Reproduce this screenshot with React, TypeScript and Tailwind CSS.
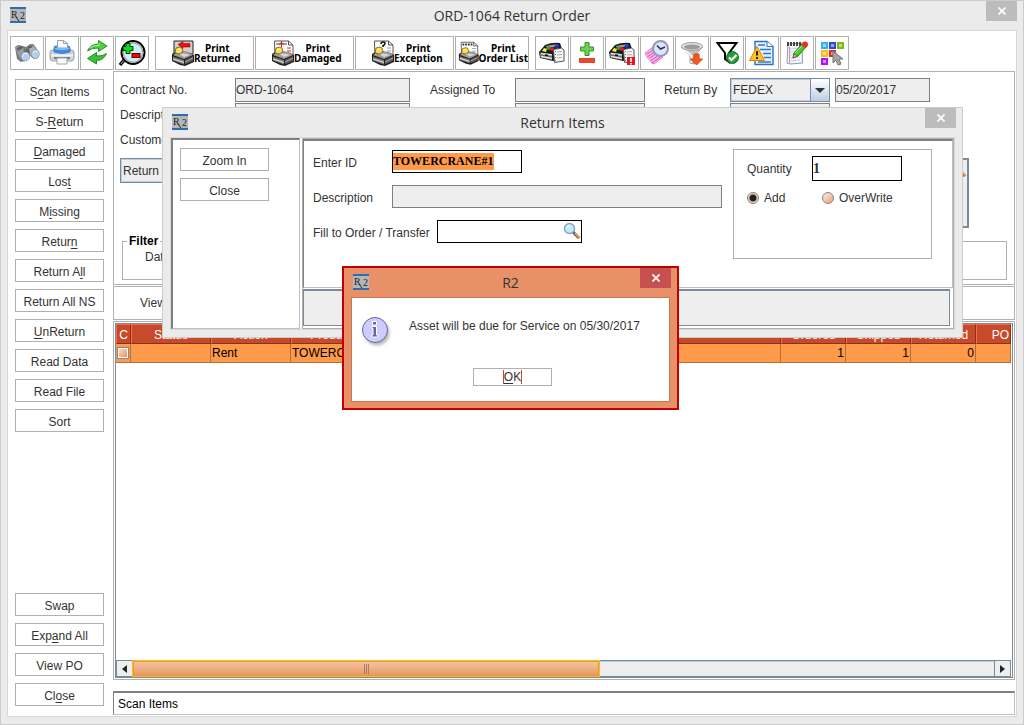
import type { ReactNode } from "react";

const field =
  "h-6 border border-[#7f7f7f] bg-[#eeeeee] text-xs text-[#333333] outline-none";

/* ---------- icons ---------- */

function R2Icon() {
  return (
    <svg width="16" height="16" viewBox="0 0 16 16" aria-hidden="true">
      <rect width="16" height="16" fill="#b4b7ba" />
      <rect width="16" height="2" fill="#2f6cb0" />
      <rect y="14" width="16" height="2" fill="#2f6cb0" />
      <text x="1" y="11" fontSize="10" fill="#222" fontFamily="Liberation Serif, serif">
        R
      </text>
      <text x="10" y="12" fontSize="10" fill="#222" fontFamily="Liberation Serif, serif">
        2
      </text>
      <path d="M6 10l3 4" stroke="#222" />
    </svg>
  );
}

function Icon({ children }: { children: ReactNode }) {
  return (
    <svg width="28" height="28" viewBox="0 0 28 28" fill="none" aria-hidden="true">
      {children}
    </svg>
  );
}

function BinocularsIcon() {
  return (
    <Icon>
      <path d="M2 8l3-2 5 1 3 1 4-3h3l2 2 4 7-1 5-4 1-5-4-4 6-4 1-4-3z" fill="#777b80" />
      <path d="M3 8l3-1 4 2 5 6-5 5-3-1-3-6z" fill="#9a9ea3" />
      <path d="M15 6l3-.5 3 2 4 6-5 5-3-3z" fill="#aeb2b6" />
      <path d="M4 9l4-2 2 2-5 3zM15 7l3-1 2 2-5 2z" fill="#5d6066" />
      <path d="M10 11l6-1 1 4-4 1z" fill="#63666b" />
      <ellipse cx="12.500" cy="17.500" rx="4" ry="4.400" fill="#eef5fd" stroke="#8b97a8" />
      <ellipse cx="12.800" cy="18" rx="2.800" ry="3.200" fill="#a9cdf8" />
      <ellipse cx="22.500" cy="15" rx="3.600" ry="4.200" fill="#eef5fd" stroke="#8b97a8" />
      <ellipse cx="22.800" cy="15.500" rx="2.500" ry="3" fill="#a9cdf8" />
    </Icon>
  );
}

function PrinterIcon() {
  return (
    <Icon>
      <path d="M2 13q0-2 3-2h18q3 0 3 2v6q0 3-3 3H5q-3 0-3-3z" fill="#cfd3d8" stroke="#9ba1a9" />
      <path d="M6 13V9q0-2 2-2h12q2 0 2 2v4q-8 3-16 0z" fill="#3d8de8" stroke="#3f7fcf" />
      <path d="M7 9q7-2 14 0v1q-7 2-14 0z" fill="#8fc3f8" />
      <path d="M9.500 9V1.500h6l4 3V9z" fill="#f7f9fc" stroke="#9aa0a9" />
      <path d="M15.500 1.500v3h4" stroke="#9aa0a9" />
      <path d="M3 16.500h22" stroke="#f4f4f4" strokeWidth="2" />
      <path d="M6 19h16" stroke="#555b64" strokeWidth="1.500" />
      <path d="M9 19h10v6H9z" fill="#fafafa" stroke="#a4a4a4" />
    </Icon>
  );
}

function RefreshIcon() {
  return (
    <Icon>
      <path
        d="M4.500 12q3-7 11-7V1.500L24 7l-8.500 5.500V9Q9 8.500 4.500 12z"
        fill="#4fd13f"
        stroke="#22902a"
      />
      <path
        d="M23.500 14.500q-3 7-10 7V25l-9-5.500 9-6V17q6 .5 10-2.500z"
        fill="#3cc033"
        stroke="#22902a"
      />
      <path d="M7 9q3-3 9-2.500V4" stroke="#a8f09a" />
    </Icon>
  );
}

function ZoomIcon() {
  return (
    <Icon>
      <path d="M7 20l-5 6" stroke="#000" strokeWidth="3.500" />
      <path d="M6.500 20.500L3 25" stroke="#b9b9b9" />
      <circle cx="15" cy="13.500" r="11.500" fill="#cdeef2" stroke="#000" strokeWidth="2" />
      <circle cx="15" cy="13.500" r="9.800" stroke="#a9a9a9" strokeWidth="1.500" />
      <path
        d="M8 4.500h4v3h3v4h-3v3H8v-3H5v-4h3z"
        fill="#0de01b"
        stroke="#003c00"
      />
      <rect x="14" y="14.500" width="8" height="4" fill="#f00" stroke="#500" />
    </Icon>
  );
}

function TrayPrinter({ kind }: { kind: "returned" | "damaged" | "exception" | "batch" }) {
  return (
    <svg width="24" height="28" viewBox="0 0 24 28" fill="none" aria-hidden="true">
      {kind === "returned" ? (
        <>
          <path d="M3 2h19v13H3z" fill="#cfcfcf" stroke="#222" />
          <path d="M7 5.500L12 2.500v2h7v3.500h-7v1.500z" fill="#f00d0d" stroke="#800" strokeWidth=".5" />
        </>
      ) : (
        <>
          <path d="M3.500 2h14l4.500 4v13h-18z" fill="#fff" stroke="#555" />
          <path d="M17.500 2v4H22" stroke="#555" />
          <path
            d="M16 9h4M16 12h4M16 15h4"
            stroke={kind === "damaged" ? "#e01818" : "#999"}
          />
        </>
      )}
      {kind === "damaged" && (
        <>
          <path d="M5 5h11" stroke="#444" />
          <path d="M10.500 2v6M8 5.500l2.500-2 2.500 2" stroke="#e01818" />
        </>
      )}
      {kind === "exception" && (
        <path d="M10 5q0-2 2-2t2 1.500-2 2v1.500" stroke="#111" strokeWidth="1.500" />
      )}
      {kind === "batch" && (
        <path d="M5 4.500h11" stroke="#333" strokeWidth="2" strokeDasharray="2 1" />
      )}
      <path d="M1 15l5-3 11 1 6 3v7l-9 4-5-1-8-4z" fill="#1d1d1d" />
      <path d="M2 16l5-4 10 1 5 3-9 4z" fill="#9c9c9c" />
      <path d="M7 14l9 1 3 1-6 2z" fill="#d6d6d6" />
      <path d="M2 17.500l11 3.500v4.500L2 21.500z" fill="#7b7b7b" />
      <path d="M2 20l11 3.500" stroke="#dedede" strokeWidth="1.200" />
      <path d="M14 21l8-4v5l-8 3.500z" fill="#5a5a5a" />
      <path d="M14 23l8-4" stroke="#a8a8a8" />
      <path d="M4 14l1-5 4-1 2 1 1 4-4 2z" fill="#ffd94a" stroke="#6d5212" strokeWidth=".8" />
      <path d="M6 10l4 1" stroke="#fff3b0" />
    </svg>
  );
}

function DrawerShape() {
  return (
    <>
      <path d="M1 13L7 6q7-3 15-2l2 6v9l-9 3L2 19z" fill="#1b1b1b" />
      <path d="M8 7q6-2 12-1.500v2L9 9z" fill="#9a9a9a" />
      <path d="M4 12l2-3 3 1-1 3z" fill="#fff04d" />
      <path d="M8 10l2-3 2.500 1-1 3z" fill="#2aa83a" />
      <path d="M11 11l2-3 3 1-1 3z" fill="#e81818" />
      <path d="M16 8l2-3 3 1-1 3z" fill="#2438d8" />
      <path d="M2 13.500l12 1.500v6L2 18.500z" fill="#6d6d6d" />
      <path d="M3 14.500l11 1.500M3 17.500l11 2" stroke="#e2e2e2" strokeWidth="1.300" />
      <path d="M7 16l3 .5" stroke="#111" strokeWidth="1.500" />
      <path d="M15.500 10.500l8-1.500 2.500 2v11l-9.500 1.500z" fill="#f6f6f6" stroke="#555" />
      <path d="M19 13l5-.5M19 16l5-.5M19 19l5-.5" stroke="#aaa" />
      <path d="M17.500 12v10" stroke="#777" strokeDasharray="1 2" />
    </>
  );
}

function DrawerIcon() {
  return (
    <Icon>
      <DrawerShape />
    </Icon>
  );
}

function DrawerAlertIcon() {
  return (
    <Icon>
      <DrawerShape />
      <rect x="19" y="18" width="8" height="8" fill="#e5151f" />
      <path d="M23 19v4M23 24v1.500" stroke="#fff" strokeWidth="1.600" />
    </Icon>
  );
}

function PlusMinusIcon() {
  return (
    <Icon>
      <path d="M12 3.500h4V8h4.500v4H16v4.500h-4V12H7.500V8H12z" fill="#6fd04f" stroke="#2d9622" />
      <rect x="6.500" y="19.500" width="15" height="4" fill="#f0452c" stroke="#e0482c" />
    </Icon>
  );
}

function ReportClockIcon() {
  return (
    <Icon>
      <path d="M2 14L10 8l10 10-9 7q-3 0-4-4-3-1-5-7z" fill="#fbb4ee" stroke="#dc7fcb" />
      <path
        d="M4 15l7-5M5 17.500l8-5.500M7 19l8-5.500M8 21.500l9-6M9 24l9-6.500"
        stroke="#cf55b6"
      />
      <circle cx="17.500" cy="9.500" r="7.500" fill="#dbe6fa" stroke="#9099b5" strokeWidth="2" />
      <path d="M14 6.500l3.500 3.500L22 8" stroke="#27324f" strokeWidth="1.500" />
    </Icon>
  );
}

function FunnelIcon() {
  return (
    <Icon>
      <path d="M3.500 8l8.500 9v7l4 1v-8l8.500-9z" fill="#c4c4c4" stroke="#9a9a9a" />
      <path d="M6 10l7.500 7v7" stroke="#f6f6f6" strokeWidth="2" />
      <ellipse cx="14" cy="7.500" rx="10.500" ry="4" fill="#e4e4e4" stroke="#9f9f9f" />
      <ellipse cx="14" cy="8" rx="8" ry="2.500" fill="#9b9b9b" />
      <path d="M16 15h5v5h3.500L18.500 26l-6-6H16z" fill="#f4581d" stroke="#dd4312" />
    </Icon>
  );
}

function FilterCheckIcon() {
  return (
    <Icon>
      <path d="M4.500 4h19L16 14v9l-4-3v-6z" fill="#fff" stroke="#000" strokeWidth="2" />
      <circle cx="19.500" cy="18.500" r="6" fill="#259b3a" stroke="#137024" />
      <path d="M16 18.500l2.500 2.500 5-5" stroke="#fff" strokeWidth="2.200" />
    </Icon>
  );
}

function WarningDocIcon() {
  return (
    <Icon>
      <path d="M7 2.500h12l6 5v18H7z" fill="#e6f1fc" stroke="#2f72bd" strokeWidth="1.400" />
      <path d="M19 2.500v5h6" fill="#fff" stroke="#2f72bd" />
      <path d="M10 6h7M12 10.500h11M15 14.500h8M16 18.500h7M10 23h13" stroke="#2f7ad0" strokeWidth="1.500" />
      <path d="M9 7.500L1.500 21.500h15z" fill="#ffc21a" stroke="#d98600" strokeLinejoin="round" />
      <path d="M9 12v4.500M9 18v2" stroke="#222" strokeWidth="2" />
    </Icon>
  );
}

function NotepadIcon() {
  return (
    <Icon>
      <path d="M5 5l14-1 .5 20L7 25l-3-1z" fill="#f4f6fc" stroke="#9098b0" />
      <path d="M7 10l10-1M7 13l9-1M7 16l6-1M7 19l10-1M7 22l10-1" stroke="#c4d0ee" />
      <path d="M6.500 8v16" stroke="#e89090" />
      <path d="M4 5h14" stroke="#444" strokeWidth="4" strokeDasharray="2 1" />
      <path d="M10 19l1-5L19 5l4 3-8 9z" fill="#46cb28" stroke="#237d14" />
      <path d="M12 14l8-8" stroke="#a8f58c" />
      <path d="M10 19l1-4 3 2z" fill="#f3cf9a" stroke="#4a3a20" strokeWidth=".6" />
      <circle cx="22" cy="5.500" r="3" fill="#e63222" />
    </Icon>
  );
}

function PaletteGridIcon() {
  const cells = [
    [3, 3, "#35b0f5"],
    [11, 3, "#3048dd"],
    [19, 3, "#77bb12"],
    [3, 11, "#fbbd13"],
    [11, 11, "#e32d1c"],
    [3, 19, "#a818e8"],
  ] as const;
  return (
    <Icon>
      {cells.map(([x, y, color]) => (
        <g key={color}>
          <rect x={x} y={y} width="7" height="7" fill={color} />
          <rect x={x + 2} y={y + 2} width="3" height="3" fill="#fff" opacity=".5" />
        </g>
      ))}
      <path d="M15 12v12l3-3 2 5 3-1-2-5h4z" fill="#a5a5a5" stroke="#777" />
    </Icon>
  );
}

function MagnifierIcon() {
  return (
    <svg width="18" height="18" viewBox="0 0 18 18" fill="none" aria-hidden="true">
      <path d="M10 10l6 6" stroke="#5b5f66" strokeWidth="3" />
      <path d="M12 11l5 5" stroke="#f2a04a" strokeWidth="2" />
      <circle cx="6.500" cy="6.500" r="5" fill="#c5e8fb" stroke="#8ba6c4" strokeWidth="1.500" />
      <path d="M4 6q0-2 2.500-2.500" stroke="#fff" strokeWidth="1.500" />
    </svg>
  );
}

function InfoIcon() {
  return (
    <svg width="32" height="32" viewBox="0 0 32 32" aria-hidden="true">
      <defs>
        <filter id="info-shadow" x="-20%" y="-20%" width="150%" height="150%">
          <feGaussianBlur stdDeviation="1.500" />
        </filter>
      </defs>
      <circle cx="16" cy="17" r="12.500" fill="#999" opacity=".7" filter="url(#info-shadow)" />
      <circle cx="14" cy="14" r="12.500" fill="#ccccff" stroke="#666699" />
      <path
        d="M11.500 5.500h4v3.500h-4zM11 10.500h4.500v8.500h1.500v2h-6.500v-2H12v-6.500h-1z"
        fill="#666699"
        stroke="#fff"
      />
    </svg>
  );
}

function CloseGlyph() {
  return (
    <svg width="8" height="8" viewBox="0 0 8 8" aria-hidden="true">
      <path d="M.5 .5l7 7M7.500 .5l-7 7" stroke="#fff" strokeWidth="1.700" />
    </svg>
  );
}

/* ---------- shared controls ---------- */

function ToolButton({ label, children }: { label: string; children: ReactNode }) {
  return (
    <button
      aria-label={label}
      className="flex size-[34px] items-center justify-center border border-[#b0b0b0] bg-white"
    >
      {children}
    </button>
  );
}

interface PrintButtonProps {
  name: string;
  kind: "returned" | "damaged" | "exception" | "batch";
  narrow?: boolean;
}

function PrintButton({ name, kind, narrow }: PrintButtonProps) {
  return (
    <button
      className={`flex h-[34px] items-center border border-[#b0b0b0] bg-white ${
        narrow ? "w-[74px] pl-0.5" : "w-[99px] pl-[15px]"
      }`}
    >
      <TrayPrinter kind={kind} />
      <span className="-ml-px text-center font-['Noto_Sans',sans-serif] text-[10px] leading-[10px] font-bold whitespace-nowrap text-black">
        Print
        <br />
        {name}
      </span>
    </button>
  );
}

// "_" goes before the mnemonic letter
function SideButton({ text }: { text: string }) {
  const [before, after] = text.split("_");
  return (
    <button className="h-[23px] w-[89px] border border-[#b0b0b0] bg-white pt-0.5 text-xs whitespace-nowrap text-[#333333]">
      {before}
      {after && <u className="underline-offset-2">{after[0]}</u>}
      {after?.slice(1)}
    </button>
  );
}

function WindowClose({ danger }: { danger?: boolean }) {
  return (
    <button
      aria-label="Close window"
      className={`absolute top-0 right-1.5 flex h-5 w-[31px] items-center justify-center ${
        danger ? "bg-[#c75050]" : "bg-[#bcbcbc]"
      }`}
    >
      <CloseGlyph />
    </button>
  );
}

function TitleBar({ title, danger }: { title: string; danger?: boolean }) {
  return (
    <header className="relative flex h-[29px] shrink-0 items-center justify-center">
      <span className="absolute top-1.5 left-[9px]">
        <R2Icon />
      </span>
      <h2 className="font-['Open_Sans',sans-serif] text-sm text-[#333333]">{title}</h2>
      <WindowClose danger={danger} />
    </header>
  );
}

/* ---------- main window ---------- */

const sideTop = [
  "S_can Items",
  "S-_Return",
  "_Damaged",
  "Los_t",
  "M_issing",
  "Retur_n",
  "Return A_ll",
  "Return All NS",
  "_UnReturn",
  "Read Data",
  "Read File",
  "Sort",
];

const sideBottom = ["Swap", "Exp_and All", "View PO", "Cl_ose"];

function Toolbar() {
  return (
    <div className="flex gap-1.5 pt-[5px] pb-px pl-0.5">
      <div className="flex gap-px">
        <ToolButton label="Find"><BinocularsIcon /></ToolButton>
        <ToolButton label="Print"><PrinterIcon /></ToolButton>
        <ToolButton label="Refresh"><RefreshIcon /></ToolButton>
        <ToolButton label="Zoom"><ZoomIcon /></ToolButton>
      </div>
      <div className="flex gap-px">
        <PrintButton name="Returned" kind="returned" />
        <PrintButton name="Damaged" kind="damaged" />
        <PrintButton name="Exception" kind="exception" />
        <PrintButton name="Order List" kind="batch" narrow />
      </div>
      <div className="flex gap-px">
        <ToolButton label="Files"><DrawerIcon /></ToolButton>
        <ToolButton label="Add or remove"><PlusMinusIcon /></ToolButton>
        <ToolButton label="File alerts"><DrawerAlertIcon /></ToolButton>
        <ToolButton label="History"><ReportClockIcon /></ToolButton>
        <ToolButton label="Filter down"><FunnelIcon /></ToolButton>
        <ToolButton label="Apply filter"><FilterCheckIcon /></ToolButton>
        <ToolButton label="Warnings"><WarningDocIcon /></ToolButton>
        <ToolButton label="Notes"><NotepadIcon /></ToolButton>
        <ToolButton label="Layout"><PaletteGridIcon /></ToolButton>
      </div>
    </div>
  );
}

function OrderForm() {
  return (
    <section className="flex h-[214px] flex-col gap-px border border-[#b0b0b0] pt-1.5 pl-1.5 text-xs text-[#333333]">
      <div className="flex items-center">
        <label htmlFor="contract" className="w-[115px]">Contract No.</label>
        <input id="contract" readOnly defaultValue="ORD-1064" className={`${field} w-[175px]`} />
        <label htmlFor="assigned" className="w-[105px] pl-5">Assigned To</label>
        <input id="assigned" readOnly className={`${field} w-[130px]`} />
        <label htmlFor="returnBy" className="w-[85px] pl-[19px]">Return By</label>
        <div className="relative mr-[5px]">
          <select
            id="returnBy"
            className="h-6 w-[100px] appearance-none border border-[#7a8a99] bg-[#eeeeee] pl-0.5 text-xs shadow-[inset_0_0_0_1px_#b8cfe5] outline-none"
          >
            <option>FEDEX</option>
          </select>
          <span className="pointer-events-none absolute inset-y-0 right-0 flex w-5 items-center justify-center border border-[#7a8a99] bg-linear-to-b from-white to-[#b8cfe5]">
            <svg width="10" height="5" viewBox="0 0 10 5" aria-hidden="true">
              <path d="M0 0h10L5 5z" fill="#333" />
            </svg>
          </span>
        </div>
        <input aria-label="Return date" readOnly defaultValue="05/20/2017" className={`${field} w-[95px]`} />
      </div>
      <div className="flex items-center">
        <label htmlFor="desc" className="w-[115px]">Description</label>
        <input id="desc" readOnly className={`${field} w-[175px]`} />
        <input aria-label="Assigned detail" readOnly className={`${field} ml-[105px] w-[130px]`} />
        <input aria-label="Carrier detail" readOnly className={`${field} ml-[85px] w-[100px]`} />
      </div>
      <div className="flex items-center">
        <label htmlFor="customer" className="w-[115px]">Customer</label>
        <input id="customer" readOnly className={`${field} w-[175px]`} />
      </div>
      <div className="mt-[5px] flex h-[70px] w-[849px] items-start justify-between">
        <button className="h-[25px] w-[90px] border border-[#7a8a99] bg-[#eeeeee] pl-0.5 text-left shadow-[inset_0_0_0_1px_#b8cfe5]">
          Return
        </button>
        <div className="flex h-[70px] w-40 justify-end border-2 border-[#7a8a99] bg-[#eeeeee]">
          <MagnifierIcon />
        </div>
      </div>
      <fieldset className="mt-1 mr-[7px] ml-0.5 h-[47px] border border-[#b0b0b0] pl-4">
        <legend className="-ml-3 px-0.5 font-bold text-black">Filter</legend>
        <span className="ml-1.5">Date</span>
      </fieldset>
    </section>
  );
}

const th =
  "border-t border-l border-t-[#ff6a40] border-l-[#ff6a40] border-r border-b border-r-[#8c3018] border-b-[#8c3018] bg-[#c64a2c] p-0 pt-0.5 font-normal text-white";
const td = "border-r border-b border-[#b5703a] p-0 px-px";

function ItemsTable() {
  return (
    <section className="flex flex-1 flex-col border border-[#b0b0b0] p-px">
      <div className="flex flex-1 flex-col overflow-hidden border border-[#7a8a99] pr-px">
        <table className="w-full table-fixed border-separate border-spacing-0 text-xs">
          <colgroup>
            <col className="w-[15px]" />
            <col className="w-20" />
            <col className="w-20" />
            <col className="w-20" />
            <col />
            <col className="w-[65px]" />
            <col className="w-[65px]" />
            <col className="w-[65px]" />
            <col className="w-[35px]" />
          </colgroup>
          <thead>
            <tr className="h-5">
              <th className={th}>C</th>
              <th className={th}>Status</th>
              <th className={th}>Action</th>
              <th className={th}>Product</th>
              <th className={th}>Description</th>
              <th className={th}>Ordered</th>
              <th className={th}>Shipped</th>
              <th className={th}>Returned</th>
              <th className={`${th} pl-3.5`}>PO</th>
            </tr>
          </thead>
          <tbody>
            <tr className="h-[19px] bg-[#ff9a4a] text-black">
              <td className={td}>
                <input
                  type="checkbox"
                  aria-label="Select row"
                  className="block size-3 appearance-none border border-[#7a8a99] bg-linear-to-br from-[#fbe0cc] to-[#e88a48] shadow-[inset_0_0_0_1px_#fff]"
                />
              </td>
              <td className={td}></td>
              <td className={td}>Rent</td>
              <td className={`${td} overflow-hidden whitespace-nowrap`}>TOWERCRANE</td>
              <td className={td}></td>
              <td className={`${td} text-right`}>1</td>
              <td className={`${td} text-right`}>1</td>
              <td className={`${td} text-right`}>0</td>
              <td className={td}></td>
            </tr>
          </tbody>
        </table>
        <div className="mt-auto flex h-[17px] border border-[#7a8a99] bg-[#eeeeee]">
          <button aria-label="Scroll left" className="flex w-[15px] items-center justify-center">
            <svg width="5" height="8" viewBox="0 0 5 8" aria-hidden="true">
              <path d="M5 0v8L0 4z" fill="#222" />
            </svg>
          </button>
          <div className="flex flex-1 border-y border-t-[#b8cfe5] border-b-transparent">
            <div className="-my-0.5 flex w-[54.3%] items-center justify-center gap-px border border-[#fdbe10] bg-linear-to-b from-[#f3c6a4] to-[#e8965c] shadow-[inset_0_0_0_1px_#e8964e]">
              <span className="h-2.5 w-px bg-[#a08070]" />
              <span className="h-2.5 w-px bg-[#a08070]" />
              <span className="h-2.5 w-px bg-[#a08070]" />
            </div>
          </div>
          <button
            aria-label="Scroll right"
            className="flex w-4 items-center justify-center border-l border-[#7a8a99]"
          >
            <svg width="5" height="8" viewBox="0 0 5 8" aria-hidden="true">
              <path d="M0 0v8l5-4z" fill="#222" />
            </svg>
          </button>
        </div>
      </div>
    </section>
  );
}

/* ---------- dialogs ---------- */

const entry = "h-[23px] border bg-white outline-none";
const radio =
  "size-3 appearance-none rounded-full border border-[#7a8a99] bg-linear-to-br from-[#fdeee2] to-[#eaa070] checked:bg-[radial-gradient(circle,#222_0_3px,#f3c8a8_4px)]";

function ReturnItemsDialog() {
  return (
    <div
      role="dialog"
      aria-label="Return Items"
      className="absolute top-[106px] left-[161px] flex h-[231px] w-[801px] flex-col border border-[#cccccc] bg-[#ebebeb] px-[7px] pb-[7px] text-xs text-[#333333]"
    >
      <div className="-mx-[7px]">
        <TitleBar title="Return Items" />
      </div>
      <div className="flex flex-1 gap-0.5 border border-[#d8d8d8] bg-white">
        <div className="flex w-[129px] flex-col gap-[7px] border border-t-2 border-l-2 border-[#c0c0c0] border-t-[#808080] border-l-[#808080] pt-2 pl-[7px]">
          <SideButton text="Zoom In" />
          <SideButton text="Close" />
        </div>
        <div className="flex flex-1 flex-col border border-[#b0b0b0]">
          <div className="flex h-[149px] justify-between border border-t-2 border-[#c0c0c0] border-t-[#808080] border-l-[#808080] pt-[9px] pr-5 pl-[9px]">
            <div className="flex flex-col gap-3">
              <div className="flex items-center">
                <label htmlFor="enterId" className="w-[79px] pt-0.5">Enter ID</label>
                <input
                  id="enterId"
                  defaultValue="TOWERCRANE#1"
                  className={`${entry} w-[130px] border-black bg-linear-to-r from-[#ff9a4a] to-[#ff9a4a] bg-[length:101px_17px] bg-[position:0_2px] bg-no-repeat font-['Liberation_Serif',serif] text-xs font-bold text-black`}
                />
              </div>
              <div className="flex items-center">
                <label htmlFor="itemDesc" className="w-[79px] pt-0.5">Description</label>
                <input
                  id="itemDesc"
                  readOnly
                  className="h-[23px] w-[330px] border border-[#7f7f7f] bg-[#eeeeee] outline-none"
                />
              </div>
              <div className="flex items-center">
                <label htmlFor="fillTo" className="w-[124px] pt-0.5">Fill to Order / Transfer</label>
                <div className="relative">
                  <input id="fillTo" className={`${entry} block w-[145px] border-black`} />
                  <span className="absolute top-0.5 right-px">
                    <MagnifierIcon />
                  </span>
                </div>
              </div>
            </div>
            <div className="-mt-px h-[110px] w-[199px] border border-[#b0b0b0] pt-1.5 pl-[13px]">
              <div className="flex items-center">
                <label htmlFor="qty" className="w-[65px]">Quantity</label>
                <input
                  id="qty"
                  defaultValue="1"
                  className="h-[25px] w-[90px] border border-black bg-white font-['Liberation_Serif',serif] text-sm font-bold outline-none"
                />
              </div>
              <div className="mt-[9px] flex items-center">
                <label className="flex w-[75px] items-center gap-[5px]">
                  <input type="radio" name="mode" defaultChecked className={radio} />
                  Add
                </label>
                <label className="flex items-center gap-[5px]">
                  <input type="radio" name="mode" className={radio} />
                  OverWrite
                </label>
              </div>
            </div>
          </div>
          <div className="mt-px mr-[3px] mb-0.5 flex-1 border border-t-2 border-[#7a8a99] bg-[#eeeeee]" />
        </div>
      </div>
    </div>
  );
}

function ServiceAlert() {
  return (
    <div
      role="alertdialog"
      aria-label="R2"
      className="absolute top-[265px] left-[341px] flex h-36 w-[337px] flex-col border-2 border-[#c00000] bg-[#e89068] text-xs text-[#333333]"
    >
      <TitleBar title="R2" danger />
      <div className="mx-[7px] mb-1.5 flex flex-1 flex-col border border-[#c87850] bg-white pt-[18px] pl-[9px]">
        <div className="flex items-start gap-4">
          <InfoIcon />
          <p className="pt-0.5">Asset will be due for Service on 05/30/2017</p>
        </div>
        <button className="mt-5 ml-28 flex h-[18px] w-[79px] items-center justify-center border border-[#b0b0b0] bg-white">
          <span className="border-x border-[#c64a2c] leading-[14px]">
            <u className="underline-offset-2">O</u>K
          </span>
        </button>
      </div>
    </div>
  );
}

export default function App() {
  return (
    <div className="relative flex min-h-screen flex-col border border-[#cccccc] bg-[#ebebeb] font-['Liberation_Sans',Arial,sans-serif]">
      <TitleBar title="ORD-1064 Return Order" />
      <main className="mx-1.5 mb-[7px] flex flex-1 flex-col border border-[#d8d8d8] bg-white">
        <Toolbar />
        <div className="flex flex-1">
          <nav className="flex w-[105px] flex-col gap-[7px] pt-2 pb-2.5 pl-[7px]">
            {sideTop.map((text) => (
              <SideButton key={text} text={text} />
            ))}
            <div className="mt-auto flex flex-col gap-[7px]">
              {sideBottom.map((text) => (
                <SideButton key={text} text={text} />
              ))}
            </div>
          </nav>
          <div className="flex flex-1 flex-col gap-px pr-px">
            <OrderForm />
            <section className="flex h-[34px] items-center border border-[#b0b0b0] pl-[26px] text-xs text-[#333333]">
              View
            </section>
            <ItemsTable />
            <output className="mt-2.5 mb-px flex h-6 items-center border border-t-2 border-[#c0c0c0] border-t-[#808080] border-l-[#808080] pl-1 text-xs text-black">
              Scan Items
            </output>
          </div>
        </div>
      </main>
      <ReturnItemsDialog />
      <ServiceAlert />
    </div>
  );
}
